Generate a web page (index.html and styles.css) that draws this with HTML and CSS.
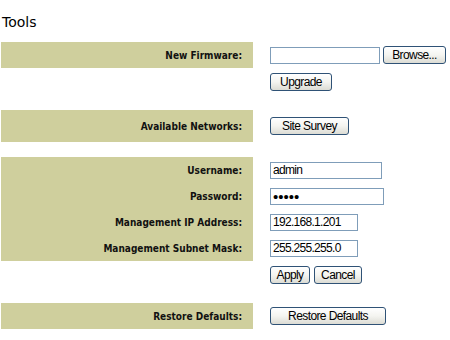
FILE: index.html
```html
<!DOCTYPE html>
<html lang="en">
<head>
    <meta charset="UTF-8">
    <title>Tools</title>
    <link rel="stylesheet" href="styles.css">
</head>
<body>

    <h1 class="title">Tools</h1>

    <table class="tools">
        <tr class="row">
            <td class="label">New Firmware:</td>
            <td class="field">
                <input type="text" class="file-box">
                <button class="btn browse">Browse...</button>
            </td>
        </tr>
        <tr class="row-plain">
            <td></td>
            <td class="field"><button class="btn upgrade">Upgrade</button></td>
        </tr>
        <tr class="gap"><td colspan="2"></td></tr>

        <tr class="row tall">
            <td class="label">Available Networks:</td>
            <td class="field"><button class="btn survey">Site Survey</button></td>
        </tr>
        <tr class="gap"><td colspan="2"></td></tr>

        <tr class="row">
            <td class="label">Username:</td>
            <td class="field"><input type="text" class="user" value="admin"></td>
        </tr>
        <tr class="row">
            <td class="label">Password:</td>
            <td class="field"><input type="password" class="pass" value="admin"></td>
        </tr>
        <tr class="row">
            <td class="label">Management IP Address:</td>
            <td class="field"><input type="text" class="ip" value="192.168.1.201"></td>
        </tr>
        <tr class="row">
            <td class="label">Management Subnet Mask:</td>
            <td class="field"><input type="text" class="ip" value="255.255.255.0"></td>
        </tr>
        <tr class="row-plain">
            <td></td>
            <td class="field">
                <button class="btn apply">Apply</button>
                <button class="btn cancel">Cancel</button>
            </td>
        </tr>
        <tr class="gap"><td colspan="2"></td></tr>

        <tr class="row">
            <td class="label">Restore Defaults:</td>
            <td class="field"><button class="btn restore">Restore Defaults</button></td>
        </tr>
    </table>

</body>
</html>
```

FILE: styles.css
```css
body {
    margin: 0;
    background: #fff;
    font-family: "DejaVu Sans", Verdana, sans-serif;
    color: #000;
}
.title {
    margin: 0;
    padding: 14px 0 0 2px;
    height: 28px;
    font-size: 14px;
    font-weight: normal;
    line-height: 16px;
    box-sizing: content-box;
}
.tools {
    margin-left: 1px;
    border-collapse: collapse;
}
.tools td {
    padding: 0;
}
.row td {
    height: 26px;
}
.row.tall td {
    height: 32px;
}
.row-plain td {
    height: 27px;
}
.gap td {
    height: 15px;
}
.label {
    width: 241px;
    padding-right: 11px !important;
    background-color: #cfcf9d;
    text-align: right;
    font-family: "DejaVu Sans Condensed", "DejaVu Sans", sans-serif;
    font-weight: bold;
    font-size: 10px;
    color: #111;
}
.field {
    padding-left: 17px !important;
    white-space: nowrap;
    vertical-align: middle;
    font-size: 0;
}
.field input {
    box-sizing: border-box;
    height: 17px;
    margin: 0;
    padding: 0 2px;
    border: 1px solid #7f9db9;
    font-family: "Liberation Sans", Arial, sans-serif;
    font-size: 12px;
    letter-spacing: -0.7px;
    vertical-align: middle;
}
.field input.pass {
    font-size: 15px;
    letter-spacing: 0;
}
.btn {
    box-sizing: border-box;
    height: 18px;
    margin: 0;
    padding: 0;
    border: 1px solid #2f5276;
    border-radius: 3px;
    background: linear-gradient(#ffffff, #f4f4f0 50%, #dcdcd4);
    font-family: "Liberation Sans", Arial, sans-serif;
    font-size: 12px;
    letter-spacing: -0.6px;
    color: #000;
    vertical-align: middle;
    cursor: pointer;
}
.file-box { width: 110px; }
.browse { width: 63px; margin-left: 3px; }
.upgrade { width: 62px; }
.survey { width: 79px; }
.user { width: 112px; }
.pass { width: 114px; }
.ip { width: 88px; }
.apply { width: 40px; }
.cancel { width: 48px; margin-left: 4px; }
.restore { width: 116px; }
```
